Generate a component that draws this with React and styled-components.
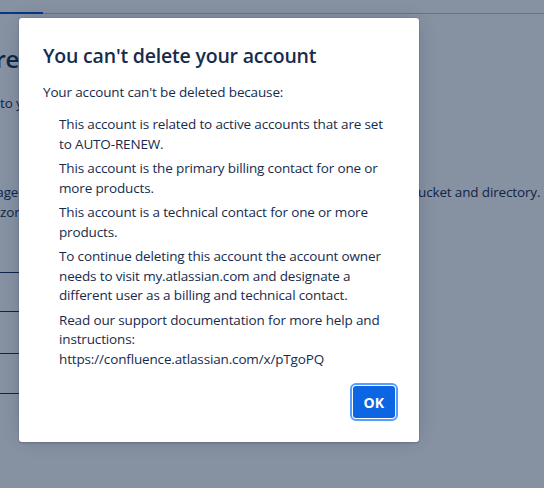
import styled, { createGlobalStyle } from 'styled-components';

// "계정 삭제 불가" 모달. 뒤에는 흐리게 가려진 계정 설정 페이지가 깔립니다.

const REASONS = [
  'This account is related to active accounts that are set to AUTO-RENEW.',
  'This account is the primary billing contact for one or more products.',
  'This account is a technical contact for one or more products.',
  'To continue deleting this account the account owner needs to visit my.atlassian.com and designate a different user as a billing and technical contact.',
  'Read our support documentation for more help and instructions: https://confluence.atlassian.com/x/pTgoPQ',
];

const Global = createGlobalStyle`
  html, body {
    margin: 0;
    padding: 0;
    background: #fff;
  }
  body {
    font-family: 'Open Sans', 'Noto Sans', sans-serif;
    color: #172b4d;
  }
`;

const Page = styled.div`
  position: relative;
  width: 544px;
  height: 488px;
  overflow: hidden;
  background: #fff;
`;

const TabBar = styled.div`
  display: flex;
  height: 13px;
  border-bottom: 1px solid #c1c7d0;
`;

const Tab = styled.div`
  width: 43px;
  border-bottom: 2px solid ${({ $active }) => ($active ? '#0052cc' : 'transparent')};
  margin-bottom: -1px;
`;

const Content = styled.div`
  display: flex;
  flex-direction: column;
  white-space: nowrap;
`;

// 왼쪽 가장자리에서 잘린 줄: 끝부분만 보이도록 오른쪽 정렬 후 잘라냅니다.
const Tail = styled.div`
  display: flex;
  justify-content: flex-end;
  width: ${({ $w }) => $w}px;
  overflow: hidden;
  flex-shrink: 0;
`;

const Heading = styled.h1`
  display: flex;
  margin: 31px 0 0;
  font-size: 24px;
  font-weight: 600;
  line-height: 28px;
  letter-spacing: -0.3px;
`;

const Line = styled.p`
  margin: ${({ $top }) => $top}px 0 0;
  font-size: 13.5px;
  line-height: 20px;
  letter-spacing: -0.15px;
  display: flex;
`;

const Gap = styled.span`
  flex-shrink: 0;
  width: ${({ $w }) => $w}px;
`;

const Rows = styled.div`
  margin-top: 50px;
  width: 300px;
  display: flex;
  flex-direction: column;
`;

const Row = styled.div`
  height: ${({ $h }) => $h}px;
  border-top: 1px solid #172b4d;
`;

const Blanket = styled.div`
  position: absolute;
  inset: 0;
  background: rgba(9, 30, 66, 0.49);
`;

const Dialog = styled.div`
  position: absolute;
  left: 19px;
  top: 18px;
  width: 400px;
  box-sizing: border-box;
  padding: 26px 24px 24px;
  background: #fff;
  border-radius: 3px;
  box-shadow: 0 0 0 1px rgba(9, 30, 66, 0.08), 0 2px 1px rgba(9, 30, 66, 0.08),
    0 0 20px -6px rgba(9, 30, 66, 0.31);
  display: flex;
  flex-direction: column;
`;

const Title = styled.h2`
  margin: 0;
  font-size: 19.5px;
  font-weight: 600;
  line-height: 24px;
  letter-spacing: -0.2px;
  color: #172b4d;
`;

const Text = styled.p`
  margin: 14px 0 0;
  font-size: 13.5px;
  line-height: 20px;
  letter-spacing: -0.15px;
`;

const List = styled.ul`
  list-style: none;
  margin: 13px 0 0;
  padding: 0 0 0 16px;
  display: flex;
  flex-direction: column;
  gap: 5px;
`;

const Item = styled.li`
  font-size: 13.5px;
  line-height: 19.5px;
  letter-spacing: -0.15px;
`;

const Footer = styled.div`
  display: flex;
  justify-content: flex-end;
  margin-top: 17px;
`;

const Button = styled.button`
  height: 32px;
  padding: 0 11px;
  border: 0;
  border-radius: 3px;
  background: #0c66e4;
  color: #fff;
  font-family: inherit;
  font-size: 14px;
  font-weight: 700;
  outline: 2px solid #579dff;
  outline-offset: 1px;
`;

export default function App() {
  return (
    <Page>
      <Global />
      <TabBar>
        <Tab $active />
      </TabBar>
      <Content>
        <Heading>
          <Tail $w={19}>Before you delete your account, make sure you're sure</Tail>
        </Heading>
        <Line $top={20}>to your account is removed.</Line>
        <Line $top={69}>
          <Tail $w={29}>Manage your Bitbucket storage a</Tail>
          <Gap $w={389} />
          ucket and directory. Use the
        </Line>
        <Line $top={0}>zone settings.</Line>
        <Rows>
          <Row $h={38} />
          <Row $h={41} />
          <Row $h={39} />
          <Row $h={0} />
        </Rows>
      </Content>
      <Blanket />
      <Dialog role="dialog">
        <Title>You can't delete your account</Title>
        <Text>Your account can't be deleted because:</Text>
        <List>
          {REASONS.map((r) => (
            <Item key={r}>{r}</Item>
          ))}
        </List>
        <Footer>
          <Button type="button">OK</Button>
        </Footer>
      </Dialog>
    </Page>
  );
}
